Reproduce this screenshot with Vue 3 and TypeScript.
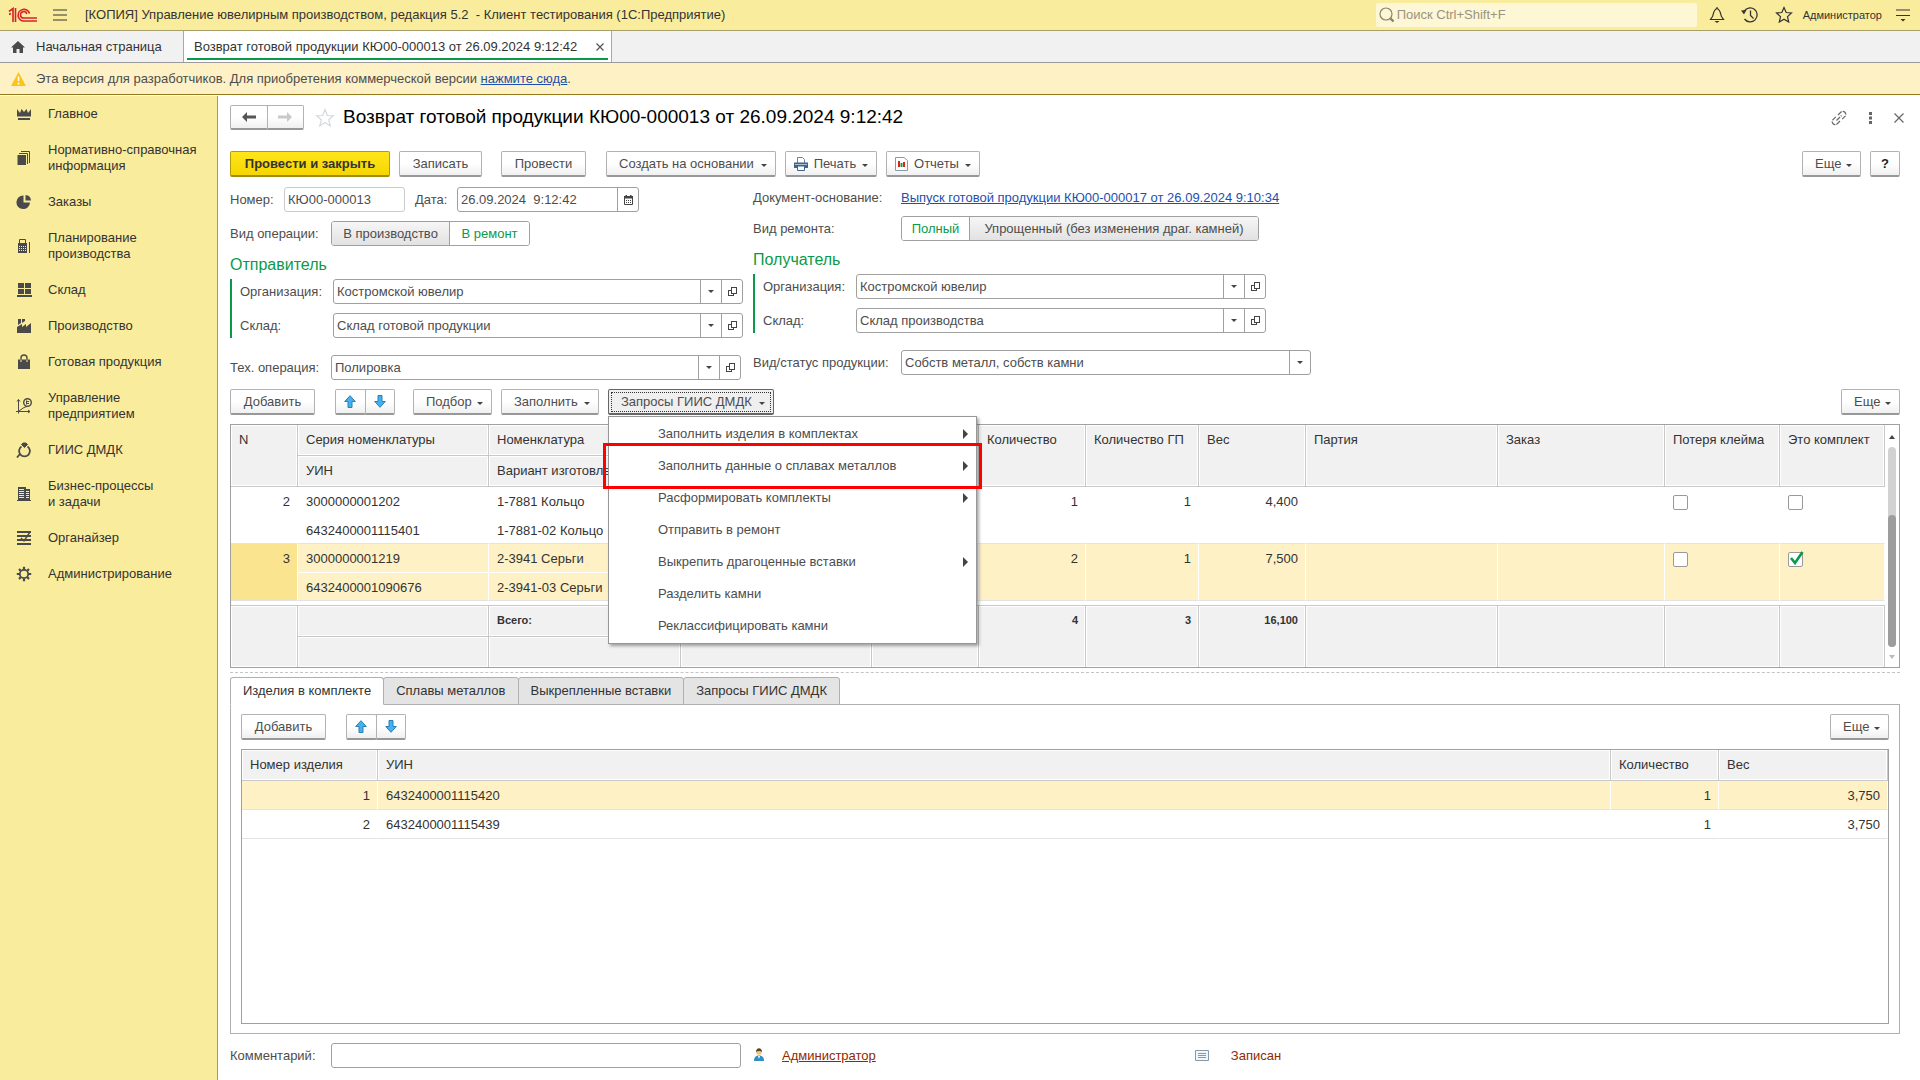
<script setup lang="ts">
import { ref } from 'vue'

interface NavItem { icon: string; lines: string[] }
interface Row {
  n: number; series: string; uin: string; item: string; variant: string
  qty: number; qtyDone: number; weight: string; lost: boolean; kit: boolean; active: boolean
}

const nav: NavItem[] = [
  { icon: 'crown', lines: ['Главное'] },
  { icon: 'docs', lines: ['Нормативно-справочная', 'информация'] },
  { icon: 'pie', lines: ['Заказы'] },
  { icon: 'calc', lines: ['Планирование', 'производства'] },
  { icon: 'boxes', lines: ['Склад'] },
  { icon: 'factory', lines: ['Производство'] },
  { icon: 'bag', lines: ['Готовая продукция'] },
  { icon: 'chart', lines: ['Управление', 'предприятием'] },
  { icon: 'ring', lines: ['ГИИС ДМДК'] },
  { icon: 'building', lines: ['Бизнес-процессы', 'и задачи'] },
  { icon: 'list', lines: ['Органайзер'] },
  { icon: 'gear', lines: ['Администрирование'] },
]

const rows = ref<Row[]>([
  { n: 2, series: '3000000001202', uin: '6432400001115401', item: '1-7881 Кольцо', variant: '1-7881-02 Кольцо', qty: 1, qtyDone: 1, weight: '4,400', lost: false, kit: false, active: false },
  { n: 3, series: '3000000001219', uin: '6432400001090676', item: '2-3941 Серьги', variant: '2-3941-03 Серьги', qty: 2, qtyDone: 1, weight: '7,500', lost: false, kit: true, active: true },
])

const kitRows = [
  { n: 1, uin: '6432400001115420', qty: 1, weight: '3,750' },
  { n: 2, uin: '6432400001115439', qty: 1, weight: '3,750' },
]

const menu = [
  { text: 'Заполнить изделия в комплектах', sub: true },
  { text: 'Заполнить данные о сплавах металлов', sub: true },
  { text: 'Расформировать комплекты', sub: true },
  { text: 'Отправить в ремонт', sub: false },
  { text: 'Выкрепить драгоценные вставки', sub: true },
  { text: 'Разделить камни', sub: false },
  { text: 'Реклассифицировать камни', sub: false },
]

const tabs = ['Изделия в комплекте', 'Сплавы металлов', 'Выкрепленные вставки', 'Запросы ГИИС ДМДК']

const sender = ref({ org: 'Костромской ювелир', store: 'Склад готовой продукции' })
const receiver = ref({ org: 'Костромской ювелир', store: 'Склад производства' })
const docNumber = ref('КЮ00-000013')
const docDate = ref('26.09.2024  9:12:42')
const operation = ref('Полировка')
const productKind = ref('Собств металл, собств камни')
const comment = ref('')
</script>

<template>
  <div class="app">
    <header class="titlebar">
      <svg class="logo" width="30" height="16" viewBox="0 0 30 16" fill="none" stroke="#d8202a">
        <path d="M1 4.5 5 1.500V15M1 7.500l2-1" stroke-width="1.600" />
        <path d="M7.500 1v14" stroke-width="1.600" />
        <path d="M21.500 6.500A5.800 5.800 0 1 0 16 14H29" stroke-width="1.700" />
        <path d="M18.800 7A3.200 3.200 0 1 0 16 11H29" stroke-width="1.500" />
      </svg>
      <button class="plain burger" aria-label="Меню">
        <svg width="14" height="12" viewBox="0 0 14 12" stroke="#333" stroke-width="1.200"><path d="M0 1h14M0 6h14M0 11h14" /></svg>
      </button>
      <span class="app-title">[КОПИЯ] Управление ювелирным производством, редакция 5.2 &nbsp;- Клиент тестирования (1С:Предприятие)</span>
      <div class="search">
        <svg width="16" height="16" viewBox="0 0 16 16" fill="none" stroke="#8a8468"><circle cx="7" cy="7" r="6" stroke-width="1.200" /><path d="m11.500 11.500 3 3" stroke-width="2.400" /></svg>
        <input type="text" placeholder="Поиск Ctrl+Shift+F" aria-label="Поиск" />
      </div>
      <button class="plain" aria-label="Уведомления">
        <svg width="16" height="18" viewBox="0 0 16 18" fill="none" stroke="#333" stroke-width="1.200"><path d="M1.500 13.500h13l-2-3C11.500 9 12 4 8 2.500 4 4 4.500 9 3.500 10.500zM8 1v2" /><path d="M5.500 15h5L8 17z" fill="#333" stroke="none" /></svg>
      </button>
      <button class="plain" aria-label="История">
        <svg width="18" height="18" viewBox="0 0 18 18" fill="none" stroke="#333" stroke-width="1.300"><path d="M3 5.500A7 7 0 1 1 3.500 13M9.500 4.500V9.500l3 3" /><path d="M0 4.500l5.500-.5L3 8.500z" fill="#333" stroke="none" /></svg>
      </button>
      <button class="plain" aria-label="Избранное">
        <svg width="18" height="18" viewBox="0 0 18 18" fill="none" stroke="#333" stroke-width="1.200"><path d="m9 1.500 2.200 5 5.300.5-4 3.600 1.200 5.400L9 13.200 4.300 16l1.200-5.400-4-3.600 5.300-.5z" /></svg>
      </button>
      <span class="user">Администратор</span>
      <button class="plain" aria-label="Настройки">
        <svg width="14" height="14" viewBox="0 0 14 14" stroke="#333" stroke-width="1.200"><path d="M0 2h14M0 7.500h14" /><path d="M4.500 11h5L7 13.500z" fill="#333" stroke="none" /></svg>
      </button>
    </header>

    <nav class="tabbar">
      <a href="#" class="home-tab">
        <svg width="14" height="12" viewBox="0 0 14 12" fill="#4a4a4a"><path d="M7 0 0 6.500h2V12h3.500V8h3v4H12V6.500h2z" /></svg>
        Начальная страница
      </a>
      <div class="open-tab">
        <a href="#">Возврат готовой продукции КЮ00-000013 от 26.09.2024 9:12:42</a>
        <button class="plain" aria-label="Закрыть вкладку">
          <svg width="8" height="8" viewBox="0 0 8 8" stroke="#555" stroke-width="1.200"><path d="M.5.5l7 7M7.500.5l-7 7" /></svg>
        </button>
      </div>
    </nav>

    <div class="notice">
      <svg width="15" height="14" viewBox="0 0 15 14"><path d="M7.500 0 15 14H0z" fill="#fac517" /><path d="M7.500 4.500V9M7.500 10.500v2" stroke="#fff" stroke-width="1.600" /></svg>
      <span>Эта версия для разработчиков. Для приобретения коммерческой версии <a href="#">нажмите сюда</a>.</span>
    </div>

    <div class="body">
      <aside class="sidebar">
        <a v-for="item in nav" :key="item.icon" href="#" class="nav-item">
          <svg width="16" height="16" viewBox="0 0 16 16" fill="#4a4a4a">
            <path v-if="item.icon === 'crown'" d="M1 3l3 4 1.500-4L8 6l2.500-3L12 7l3-4v7.500H1zM2 12h12v2H2z" />
            <g v-else-if="item.icon === 'docs'"><path d="M1.500 5h8.500v10H1.500z" /><path d="M3 3.500h8.500V14M5 1.500h8.500V13" fill="none" stroke="#4a4a4a" /></g>
            <path v-else-if="item.icon === 'pie'" d="M7.500 1.500v7H14A6.800 6.800 0 1 1 7.500 1.500zM9.500 1A6 6 0 0 1 15 6.500H9.500z" />
            <g v-else-if="item.icon === 'calc'"><path d="M2 5h9v10H2zM13 4h1v11h-1z" /><path d="M3.500 5V1.500h6V5" fill="none" stroke="#4a4a4a" /><path d="M3 8.500h7M3 10.500h7M3 12.500h7" stroke="#faec9d" stroke-dasharray="1 1" /></g>
            <path v-else-if="item.icon === 'boxes'" d="M2 1h6v5H2zM9 1h6v5H9zM2 7h6v5H2zM9 7h6v5H9zM1 13h15v2H1z" />
            <path v-else-if="item.icon === 'factory'" d="M2 1h3v4L2 7zM6 1h3v2L6 5zM1 9l5-3v3l4-3v3l5-4v10H1z" />
            <g v-else-if="item.icon === 'bag'"><path d="M2 5.500h12V15H2z" /><path d="M5 5.500V4a3 3 0 0 1 6 0v1.500" fill="none" stroke="#4a4a4a" stroke-width="1.400" /><path d="M5 6v2M11 6v2" stroke="#faec9d" /></g>
            <g v-else-if="item.icon === 'chart'" fill="none" stroke="#4a4a4a"><path d="M2.500 1.500V15.500M0 13.500h14M1 3.500l1.500-2L4 3.500M12 12l2 1.500-2 1.500M3 13l5-3.500 3-1" /><circle cx="11.500" cy="4.500" r="3.800" stroke-width="1.400" /><path d="M10.500 2.500v4M10.500 3.500h2.500M10.500 5.500h2.500" /></g>
            <g v-else-if="item.icon === 'ring'" fill="none" stroke="#4a4a4a" stroke-width="1.800"><path d="M5.500 4.500a5.400 5.400 0 1 0 6 0M4 12l-3 3.500" /><path d="M5.500 2.500 7 1h3l1.500 1.500-3 3z" fill="#4a4a4a" stroke-width="1" /></g>
            <g v-else-if="item.icon === 'building'"><path d="M2 1h8v13.500H2zM10 3h4v11.500h-4z" /><path d="M3 3.500h5M3 5.500h5M3 7.500h5M3 9.500h5M3 11.500h5M10 5.500h3M10 7.500h3M10 9.500h3M10 11.500h3" stroke="#faec9d" /><path d="M1 14h14v1H1z" /></g>
            <g v-else-if="item.icon === 'list'" fill="none" stroke="#4a4a4a" stroke-width="1.800"><path d="M1 2h14M1 6h14M1 10h14M1 14h14" /><path d="M5 8l3 3 6-9" stroke-width="1.400" /></g>
            <g v-else fill="none" stroke="#4a4a4a"><circle cx="8" cy="8" r="4.200" stroke-width="1.800" /><path d="M8 .8v2.700M8 12.500v2.700M.8 8h2.700M12.500 8h2.700M3 3l1.700 1.700M11.300 11.300 13 13M13 3l-1.700 1.700M4.700 11.300 3 13" stroke-width="2.200" /></g>
          </svg>
          <span><template v-for="(line, i) in item.lines" :key="line"><br v-if="i" />{{ line }}</template></span>
        </a>
      </aside>

      <main class="content">
        <div class="doc-head">
          <div class="pair nav-pair">
            <button class="btn" aria-label="Назад"><svg width="14" height="10" viewBox="0 0 14 10" fill="#555"><path d="M5 0v3.500h9v3H5V10L0 5z" /></svg></button>
            <button class="btn" aria-label="Вперед"><svg width="14" height="10" viewBox="0 0 14 10" fill="#c9c9c9"><path d="M9 0v3.500H0v3h9V10l5-5z" /></svg></button>
          </div>
          <button class="plain star" aria-label="В избранное">
            <svg width="20" height="20" viewBox="0 0 20 20" fill="none" stroke="#d5d8dc" stroke-width="1.200"><path d="m10 1.500 2.300 6 6.200.3-4.800 4 1.600 6.200-5.300-3.500L4.700 18l1.600-6.200-4.800-4 6.200-.3z" /></svg>
          </button>
          <h1>Возврат готовой продукции КЮ00-000013 от 26.09.2024 9:12:42</h1>
          <div class="window-tools">
            <button class="plain" aria-label="Ссылка"><svg width="16" height="16" viewBox="0 0 16 16" fill="none" stroke="#666" stroke-width="1.200"><path d="M7 5l3-3a3 3 0 0 1 4.200 4.200l-3 3M9 11l-3 3A3 3 0 0 1 1.800 9.800l3-3M5.500 10.500l5-5" stroke-dasharray="5 1" /></svg></button>
            <button class="plain" aria-label="Действия"><svg width="3" height="12" viewBox="0 0 3 12" fill="#666"><path d="M0 0h3v3H0zM0 4.500h3v3H0zM0 9h3v3H0z" /></svg></button>
            <button class="plain" aria-label="Закрыть"><svg width="10" height="10" viewBox="0 0 10 10" stroke="#666" stroke-width="1.200"><path d="M.5.5l9 9M9.500.5l-9 9" /></svg></button>
          </div>
        </div>

        <div class="commands">
          <button class="btn primary">Провести и закрыть</button>
          <button class="btn save">Записать</button>
          <button class="btn post">Провести</button>
          <button class="btn drop create">Создать на основании<i class="caret" /></button>
          <button class="btn drop print">
            <svg width="14" height="14" viewBox="0 0 14 14"><path d="M3.500 6V.5h5l2 2V6" fill="#fff" stroke="#6b8199" /><path d="M0 5.500h14V11H0z" fill="#3f6486" /><path d="M3.500 9h7v4.500h-7z" fill="#fff" stroke="#3f6486" /><path d="M1 7.500h12" stroke="#a9c0d6" /></svg>
            Печать<i class="caret" />
          </button>
          <button class="btn drop report">
            <svg width="13" height="14" viewBox="0 0 13 14"><path d="M.5.5h8.500l3.500 3V13.500H.5z" fill="#fff" stroke="#8b99a8" /><path d="M3 4h2v6H3z" fill="#d9241b" /><path d="M5.500 6h2v4h-2z" fill="#1f9c3c" /><path d="M8 5h2v5H8z" fill="#d9241b" /></svg>
            Отчеты<i class="caret" />
          </button>
          <button class="btn drop more push">Еще<i class="caret" /></button>
          <button class="btn help" aria-label="Справка">?</button>
        </div>

        <div class="form">
          <section class="col">
            <div class="line">
              <label for="num" class="num-label">Номер:</label>
              <span class="field pale num-field"><input id="num" v-model="docNumber" type="text" /></span>
              <label for="date" class="date-label">Дата:</label>
              <span class="field date-field"><input id="date" v-model="docDate" type="text" />
                <button class="cell" aria-label="Календарь"><svg width="9" height="10" viewBox="0 0 9 10"><path d="M.5 1.500h8v8h-8z" fill="#fff" stroke="#444" /><path d="M0 1h9v2.500H0zM1.500 0H3v2H1.500zM6 0h1.500v2H6z" fill="#444" /><path d="M2 5.500h5M2 7.500h5" stroke="#444" stroke-dasharray="1 1" /></svg></button>
              </span>
            </div>
            <div class="line">
              <span class="label wide">Вид операции:</span>
              <div class="toggle"><button class="off">В производство</button><button class="on">В ремонт</button></div>
            </div>
            <h2>Отправитель</h2>
            <div class="group">
              <div class="line">
                <label for="s-org">Организация:</label>
                <span class="field ref-field"><input id="s-org" v-model="sender.org" type="text" /><button class="cell" aria-label="Выбрать"><i class="caret" /></button><button class="cell" aria-label="Открыть"><i class="open" /></button></span>
              </div>
              <div class="line">
                <label for="s-store">Склад:</label>
                <span class="field ref-field"><input id="s-store" v-model="sender.store" type="text" /><button class="cell" aria-label="Выбрать"><i class="caret" /></button><button class="cell" aria-label="Открыть"><i class="open" /></button></span>
              </div>
            </div>
            <div class="line last">
              <label for="oper" class="wide">Тех. операция:</label>
              <span class="field ref-field"><input id="oper" v-model="operation" type="text" /><button class="cell" aria-label="Выбрать"><i class="caret" /></button><button class="cell" aria-label="Открыть"><i class="open" /></button></span>
            </div>
          </section>

          <section class="col right">
            <div class="line short">
              <span class="label wide">Документ-основание:</span>
              <a href="#">Выпуск готовой продукции КЮ00-000017 от 26.09.2024 9:10:34</a>
            </div>
            <div class="line">
              <span class="label wide">Вид ремонта:</span>
              <div class="toggle repair"><button class="on">Полный</button><button class="off">Упрощенный (без изменения драг. камней)</button></div>
            </div>
            <h2>Получатель</h2>
            <div class="group">
              <div class="line">
                <label for="r-org">Организация:</label>
                <span class="field ref-field"><input id="r-org" v-model="receiver.org" type="text" /><button class="cell" aria-label="Выбрать"><i class="caret" /></button><button class="cell" aria-label="Открыть"><i class="open" /></button></span>
              </div>
              <div class="line">
                <label for="r-store">Склад:</label>
                <span class="field ref-field"><input id="r-store" v-model="receiver.store" type="text" /><button class="cell" aria-label="Выбрать"><i class="caret" /></button><button class="cell" aria-label="Открыть"><i class="open" /></button></span>
              </div>
            </div>
            <div class="line last">
              <label for="kind" class="wide">Вид/статус продукции:</label>
              <span class="field ref-field"><input id="kind" v-model="productKind" type="text" /><button class="cell" aria-label="Выбрать"><i class="caret" /></button></span>
            </div>
          </section>
        </div>

        <div class="commands table-commands">
          <button class="btn add">Добавить</button>
          <div class="pair move">
            <button class="btn" aria-label="Вверх"><svg width="12" height="13" viewBox="0 0 12 13"><path d="M6 .7 11.300 6.500H8v6H4v-6H.7z" fill="#45b0ee" stroke="#2a7fb5" /></svg></button>
            <button class="btn" aria-label="Вниз"><svg width="12" height="13" viewBox="0 0 12 13"><path d="M6 12.300 11.300 6.500H8v-6H4v6H.7z" fill="#45b0ee" stroke="#2a7fb5" /></svg></button>
          </div>
          <button class="btn drop pick">Подбор<i class="caret" /></button>
          <button class="btn drop fill">Заполнить<i class="caret" /></button>
          <div class="menu-anchor">
            <button class="btn drop pressed">Запросы ГИИС ДМДК<i class="caret" /></button>
            <ul class="menu">
              <li v-for="m in menu" :key="m.text">
                <button>{{ m.text }}<svg v-if="m.sub" width="5" height="10" viewBox="0 0 5 10" fill="#444"><path d="M0 0l5 5-5 5z" /></svg></button>
              </li>
            </ul>
            <div class="highlight" />
          </div>
          <button class="btn drop more push">Еще<i class="caret" /></button>
        </div>

        <div class="grid-box">
          <table class="grid">
            <colgroup>
              <col class="w67" /><col class="w191" /><col class="w192" /><col class="w191" /><col class="w107" /><col class="w107" />
              <col class="w113" /><col class="w107" /><col /><col class="w167" /><col class="w115" /><col class="w105" />
            </colgroup>
            <thead>
              <tr>
                <th rowspan="2">N</th><th>Серия номенклатуры</th><th>Номенклатура</th><th /><th rowspan="2" /><th rowspan="2">Количество</th>
                <th rowspan="2">Количество ГП</th><th rowspan="2">Вес</th><th rowspan="2">Партия</th><th rowspan="2">Заказ</th>
                <th rowspan="2">Потеря клейма</th><th rowspan="2">Это комплект</th>
              </tr>
              <tr><th>УИН</th><th>Вариант изготовления</th><th /></tr>
            </thead>
            <tbody v-for="r in rows" :key="r.n" class="record" :class="{ active: r.active }">
              <tr>
                <td rowspan="2" class="num key">{{ r.n }}</td><td class="upper">{{ r.series }}</td><td class="upper">{{ r.item }}</td><td class="upper" /><td rowspan="2" />
                <td rowspan="2" class="num">{{ r.qty }}</td><td rowspan="2" class="num">{{ r.qtyDone }}</td><td rowspan="2" class="num">{{ r.weight }}</td>
                <td rowspan="2" /><td rowspan="2" />
                <td rowspan="2"><label class="check"><input v-model="r.lost" type="checkbox" aria-label="Потеря клейма" /></label></td>
                <td rowspan="2">
                  <label class="check"><input v-model="r.kit" type="checkbox" aria-label="Это комплект" />
                    <svg v-if="r.kit" width="15" height="14" viewBox="0 0 15 14" fill="none" stroke="#0a9a4a" stroke-width="2.600"><path d="M2 7l4 5L13.500 1" /></svg>
                  </label>
                </td>
              </tr>
              <tr class="lower"><td>{{ r.uin }}</td><td>{{ r.variant }}</td><td /></tr>
            </tbody>
            <tfoot>
              <tr>
                <td rowspan="2" /><td /><td>Всего:</td><td /><td rowspan="2" /><td rowspan="2" class="num">4</td><td rowspan="2" class="num">3</td>
                <td rowspan="2" class="num">16,100</td><td rowspan="2" /><td rowspan="2" /><td rowspan="2" /><td rowspan="2" />
              </tr>
              <tr class="lower"><td /><td /><td /></tr>
            </tfoot>
          </table>
          <div class="scroll">
            <svg width="6" height="4" viewBox="0 0 6 4" fill="#444"><path d="M0 4l3-4 3 4z" /></svg>
            <div class="track"><div class="thumb" /></div>
            <svg width="6" height="4" viewBox="0 0 6 4" fill="#bbb"><path d="M0 0l3 4 3-4z" /></svg>
          </div>
        </div>

        <div class="splitter" />

        <div class="tabs">
          <button v-for="(t, i) in tabs" :key="t" :class="{ current: i === 0 }">{{ t }}</button>
        </div>
        <section class="panel">
          <div class="commands">
            <button class="btn add">Добавить</button>
            <div class="pair move">
              <button class="btn" aria-label="Вверх"><svg width="12" height="13" viewBox="0 0 12 13"><path d="M6 .7 11.300 6.500H8v6H4v-6H.7z" fill="#45b0ee" stroke="#2a7fb5" /></svg></button>
              <button class="btn" aria-label="Вниз"><svg width="12" height="13" viewBox="0 0 12 13"><path d="M6 12.300 11.300 6.500H8v-6H4v6H.7z" fill="#45b0ee" stroke="#2a7fb5" /></svg></button>
            </div>
            <button class="btn drop more push">Еще<i class="caret" /></button>
          </div>
          <div class="kit-box">
            <table class="grid kit">
              <colgroup><col class="w136" /><col /><col class="w108" /><col class="w169" /></colgroup>
              <thead><tr><th>Номер изделия</th><th>УИН</th><th>Количество</th><th>Вес</th></tr></thead>
              <tbody>
                <tr v-for="k in kitRows" :key="k.n" :class="{ active: k.n === 1 }">
                  <td class="num">{{ k.n }}</td><td>{{ k.uin }}</td><td class="num">{{ k.qty }}</td><td class="num">{{ k.weight }}</td>
                </tr>
              </tbody>
            </table>
          </div>
        </section>

        <footer class="foot">
          <label for="comment" class="wide">Комментарий:</label>
          <span class="field ref-field"><input id="comment" v-model="comment" type="text" /></span>
          <svg class="person" width="10" height="13" viewBox="0 0 10 13"><path d="M0 13c0-4 2-5.500 5-5.500s5 1.500 5 5.500z" fill="#2f8fc4" /><path d="M4 8l1 3 1-3z" fill="#fff" /><circle cx="5" cy="4" r="2.800" fill="#f0c274" /><path d="M2 4c0-5 6-5 6 0C7 2.500 3 2.500 2 4z" fill="#5a4320" /></svg>
          <a href="#" class="author">Администратор</a>
          <svg class="sheet" width="14" height="11" viewBox="0 0 14 11" fill="#f2f6fa" stroke="#8898ab"><path d="M.5.5h13v10H.5zM3 3.500h8M3 5.500h8M3 7.500h8" /></svg>
          <span class="state">Записан</span>
        </footer>
      </main>
    </div>
  </div>
</template>

<style>
body { background: #fff; }
</style>

<style scoped>
*, *::before, *::after { box-sizing: border-box; }
.app {
  min-height: 100vh; display: flex; flex-direction: column;
  font: 13px/16px "Liberation Sans", Arial, sans-serif; color: #333;
}
button, input { font: inherit; color: inherit; margin: 0; }
button { cursor: pointer; }
svg { flex: none; display: block; }
h1, h2, ul { margin: 0; padding: 0; font-weight: normal; }
.plain { border: 0; background: none; padding: 0; display: flex; }
a { color: #1d4fae; }

.titlebar { height: 31px; display: flex; align-items: center; padding: 0 10px 0 8px; background: #faec9d; border-bottom: 1px solid #a8a06a; }
.burger { margin-left: 15px; }
.app-title { margin-left: 18px; white-space: nowrap; }
.search { margin-left: auto; margin-right: 12px; width: 321px; height: 24px; padding-left: 3px; display: flex; align-items: center; background: #fdf7d6; border-radius: 2px; }
.search input { flex: 1; min-width: 0; border: 0; padding: 0 0 0 2px; background: none; outline: 0; }
.search input::placeholder { color: #999480; opacity: 1; }
.titlebar > .plain + .plain { margin-left: 16px; }
.user { margin: 0 14px 0 10px; font-size: 11px; }

.tabbar { height: 32px; display: flex; background: #f1f1f1; border-bottom: 1px solid #9b9b9b; }
.tabbar a { color: #333; text-decoration: none; white-space: nowrap; }
.home-tab { width: 183px; padding-left: 11px; display: flex; align-items: center; gap: 11px; }
.open-tab { position: relative; width: 429px; display: flex; align-items: center; justify-content: space-between; padding: 0 7px 0 10px; background: #fff; border: solid #a9a9a9; border-width: 0 1px; }
.open-tab::after { content: ""; position: absolute; left: 3px; right: 3px; bottom: 2px; height: 2px; background: #0a9a4a; }

.notice { height: 32px; padding-left: 11px; display: flex; align-items: center; gap: 10px; background: #fef1c6; border-bottom: 1px solid #957a1c; color: #4d4d4d; }

.body { flex: 1; display: flex; }
.sidebar { flex: none; width: 218px; margin-top: 1px; background: #faec9d; border-right: 1px solid #a39a6d; }
.nav-item { display: flex; align-items: center; gap: 16px; padding: 10px 0 10px 16px; color: #333; text-decoration: none; }

.content { flex: 1; min-width: 0; display: flex; flex-direction: column; padding: 10px 20px 12px 12px; color: #4d4d4d; }
.doc-head { display: flex; align-items: center; height: 25px; }
.star { margin: 0 8px 0 11px; }
h1 { padding-bottom: 2px; font-size: 19px; line-height: 24px; color: #000; white-space: nowrap; }
.window-tools { margin-left: auto; margin-right: -4px; display: flex; align-items: center; gap: 22px; }

.btn {
  height: 26px; padding: 1px 12px 0; display: flex; align-items: center; justify-content: center; white-space: nowrap;
  background: linear-gradient(#fff 50%, #f0f0f0); border: 1px solid #b2b2b2; border-bottom: 2px solid #989898; border-radius: 2px;
}
.btn.drop { justify-content: space-between; padding-right: 8px; }
.caret { display: block; border: solid transparent; border-width: 3px 3px 0; border-top-color: #444; }
.btn .caret { margin-top: 3px; }
.pair { display: flex; }
.pair .btn { flex: 1; padding: 0; }
.pair .btn + .btn { margin-left: -1px; border-radius: 0 2px 2px 0; }
.nav-pair { width: 74px; }
.nav-pair .btn { height: 25px; }
.commands { display: flex; }
.doc-head + .commands { margin-top: 21px; }
.push { margin-left: auto; }
.primary { width: 160px; font-weight: bold; color: #333; background: linear-gradient(#ffe51a, #f5d600); border-color: #b39c0c; border-bottom-color: #a08c10; }
.save { width: 83px; margin-left: 9px; }
.post { width: 85px; margin-left: 19px; }
.create { width: 170px; margin-left: 20px; }
.print { width: 92px; margin-left: 9px; }
.report { width: 94px; margin-left: 9px; }
.btn.print, .btn.report { padding-left: 8px; }
.more { width: 59px; }
.help { width: 30px; margin-left: 9px; padding: 1px 0 0; font-weight: bold; color: #222; }

.form { display: flex; margin-top: 10px; gap: 10px; }
.col { width: 513px; }
.col.right { width: 560px; }
.line { display: flex; align-items: center; height: 25px; margin-bottom: 9px; white-space: nowrap; }
.line.short { height: 20px; padding-top: 2px; }
.num-label { width: 54px; }
.date-label { margin-left: 10px; width: 42px; }
.wide { flex: none; width: 101px; }
.right .wide { width: 148px; }
.field { display: flex; height: 25px; background: #fff; border: 1px solid #a0a0a0; border-radius: 3px; }
.field.pale { border-color: #ccc; }
.field input { flex: 1; min-width: 0; padding: 0 3px; border: 0; background: none; outline: 0; white-space: pre; }
.num-field { width: 121px; }
.date-field { width: 182px; }
.ref-field { width: 410px; }
.cell { width: 21px; padding: 0; display: flex; align-items: center; justify-content: center; border: 0; border-left: 1px solid #a0a0a0; background: none; }
.open { position: relative; display: block; width: 9px; height: 9px; }
.open::before, .open::after { content: ""; position: absolute; border: 1px solid #444; background: #fff; }
.open::before { left: 0; bottom: 0; width: 6px; height: 6px; }
.open::after { right: 0; top: 0; width: 6px; height: 7px; }
.toggle { display: flex; height: 25px; width: 199px; border: 1px solid #a0a0a0; border-radius: 3px; overflow: hidden; }
.toggle.repair { width: 358px; }
.toggle button { flex: 1; border: 0; padding: 0; background: #fff; }
.toggle button:first-child { flex: none; width: 117px; }
.toggle.repair button:first-child { width: 67px; }
.toggle button + button { border-left: 1px solid #a0a0a0; }
.toggle .on { color: #0a9a4a; }
.toggle .off { background: linear-gradient(#f6f6f6, #e2e2e2); }
h2 { margin-top: -6px; padding-top: 2px; font-size: 16px; line-height: 28px; color: #0a9a4a; }
.group { border-left: 2px solid #0a9a4a; padding-left: 8px; }
.group .line:last-child { margin-bottom: 0; }
.group label { width: 93px; }
.line.last { margin-top: 17px; }

.menu-anchor { position: relative; margin-left: 9px; }
.add { width: 85px; }
.move { width: 60px; margin-left: 20px; }
.pick { width: 79px; margin-left: 18px; }
.fill { width: 98px; margin-left: 9px; }
.pressed { width: 166px; background: #efefef; border: 1px solid #666; border-bottom-width: 2px; outline: 1px dotted #333; outline-offset: -4px; }
.menu { position: absolute; z-index: 2; left: 0; top: 27px; width: 369px; height: 228px; padding: 1px 0; list-style: none; background: #fff; border: 1px solid #979797; box-shadow: 2px 2px 3px rgba(0, 0, 0, .35); }
.menu button { width: 100%; height: 32px; padding: 0 8px 0 49px; display: flex; align-items: center; justify-content: space-between; border: 0; background: none; }
.highlight { position: absolute; z-index: 3; left: -5px; top: 54px; width: 379px; height: 46px; border: 3px solid #fe0000; pointer-events: none; }

.grid-box { display: flex; margin-top: 9px; border: 1px solid #a0a0a0; color: #333; }
.grid { flex: 1; width: 100%; table-layout: fixed; border-collapse: separate; border-spacing: 0; }
.grid th, .grid td { text-align: left; font-weight: normal; vertical-align: top; padding: 7px 8px 4px; white-space: nowrap; overflow: hidden; }
.grid th { height: 31px; background: #f1f1f1; border: solid #c8c8c8; border-width: 0 1px 1px 0; box-shadow: inset 0 0 0 1px #fff; }
.grid tbody td { height: 29px; border-right: 1px solid #fff; border-bottom: 1px solid #e3e3e3; }
.grid .record .lower td { height: 28px; }
.grid tbody td.upper { border-bottom-color: #fff; }
.grid td.num { text-align: right; padding-right: 7px; }
.grid .active td { background: #fef1c6; }
.grid .active td.key { background: #fbe48f; }
.grid tfoot td { height: 32px; padding-top: 6px; background: #f1f1f1; border: solid #c8c8c8; border-width: 0 1px 1px 0; box-shadow: inset 0 0 0 1px #fff; font-size: 11px; font-weight: bold; }
.grid tfoot .lower td { height: 30px; }
.grid tfoot tr:first-child td { border-top: 1px solid #c8c8c8; }
.grid tfoot tr:last-child td, .grid tfoot td[rowspan] { border-bottom: 0; }
.grid tfoot::before { content: ""; display: block; height: 4px; }
.w67 { width: 67px; } .w191 { width: 191px; } .w192 { width: 192px; } .w107 { width: 107px; } .w113 { width: 113px; }
.w167 { width: 167px; } .w115 { width: 115px; } .w105 { width: 105px; } .w136 { width: 136px; } .w108 { width: 108px; } .w169 { width: 169px; }
.check { position: relative; display: block; width: 15px; height: 15px; margin-top: 1px; }
.check input { appearance: none; display: block; width: 15px; height: 15px; background: #fff; border: 1px solid #999; border-radius: 2px; }
.check svg { position: absolute; left: 1px; top: -1px; }
.scroll { flex: none; width: 14px; display: flex; flex-direction: column; align-items: center; padding: 10px 0 8px; }
.track { flex: 1; width: 8px; margin: 8px 0; display: flex; align-items: flex-end; background: #d2d2d2; border-radius: 4px; }
.thumb { width: 8px; height: 66%; background: #9d9d9d; border-radius: 4px; }
.splitter { margin-top: 4px; border-top: 1px dashed #c4c4c4; }

.tabs { display: flex; margin-top: 4px; color: #333; }
.tabs button { height: 28px; margin-left: -1px; padding: 0 12px; background: #e4e4e4; border: 1px solid #b0b0b0; border-radius: 3px 3px 0 0; }
.tabs .current { margin-left: 0; background: #fff; border-bottom-color: #fff; position: relative; }
.panel { flex: 1; display: flex; flex-direction: column; margin-top: -1px; padding: 9px 10px; border: 1px solid #b0b0b0; }
.kit-box { flex: 1; margin-top: 9px; border: 1px solid #a0a0a0; color: #333; }

.foot { display: flex; align-items: center; margin-top: 9px; }
.person { margin-left: 13px; margin-bottom: 3px; }
.author { margin-left: 18px; }
.foot a, .state { color: #8f2a00; }
.sheet { margin-left: 319px; }
.state { margin-left: 22px; }
</style>
